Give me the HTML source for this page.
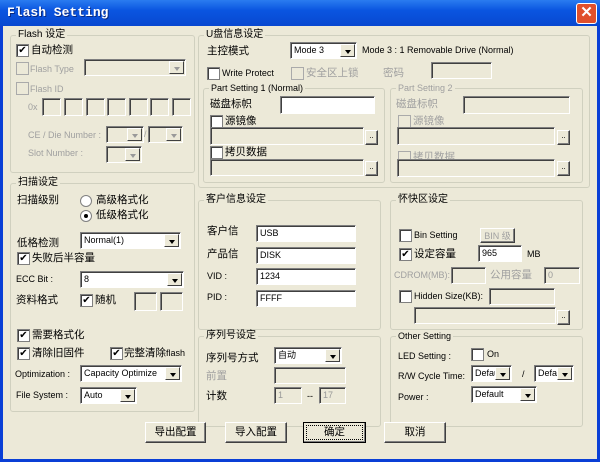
<!DOCTYPE html>
<html><head><meta charset="utf-8"><style>
*{box-sizing:border-box;margin:0;padding:0}
body{width:600px;height:462px;overflow:hidden;background:#0a3fd6;font-family:"Liberation Sans","Noto Sans CJK SC",sans-serif;font-size:9px;color:#000;position:relative}
#tb{position:absolute;left:0;top:0;width:600px;height:26px;background:linear-gradient(#2a7cf0,#0a55e0 40%,#0848d0);}
#tt{position:absolute;left:7px;top:5px;color:#fff;font:bold 13px "Liberation Mono",monospace;text-shadow:1px 1px #0a2a80}
#x{position:absolute;left:576px;top:3px;width:21px;height:21px;border:1px solid #fff;border-radius:3px;background:#e0502c;color:#fff;font:bold 15px/18px "Liberation Sans";text-align:center}
#bd{position:absolute;left:3px;top:26px;width:594px;height:433px;background:#ece9d8}
.a{position:absolute;white-space:nowrap;line-height:13px}
.c{font-size:10.5px}
.g{position:absolute;border:1px solid #d0d0bf;border-radius:3px}
.gl{position:absolute;background:#ece9d8;padding:0 2px;top:-7px;left:5px;font-size:10px;line-height:12px;white-space:nowrap}
.i{position:absolute;background:#fff;border:1px solid;border-color:#7f7f7f #fff #fff #7f7f7f;box-shadow:inset 1px 1px #404040;padding:1px 0 0 3px;font-size:9px;line-height:13px;overflow:hidden;white-space:nowrap}
.d{background:#ece9d8;color:#999}
.cb{position:absolute;width:13px;height:13px;background:#fff;border:1px solid #7f7f7f;box-shadow:inset 1px 1px #404040;font-size:10px;line-height:11px;text-align:center}
.cb.d{background:#ece9d8;box-shadow:none;border-color:#aaa}
.dr{position:absolute;right:1px;top:1px;bottom:1px;width:15px;background:#ece9d8;border:1px solid;border-color:#fff #404040 #404040 #fff}
.dr:after{content:"";position:absolute;left:4px;top:5px;border:3px solid transparent;border-top:4px solid #000}
.dd .dr:after{border-top-color:#999}
.b{position:absolute;background:#ece9d8;border:1px solid;border-color:#fff #404040 #404040 #fff;box-shadow:inset -1px -1px #808080;text-align:center;font-size:10.5px}
.gr{color:#a0a0a0}
.r{position:absolute;width:12px;height:12px;border-radius:50%;background:#fff;border:1px solid #808080}
</style></head><body>
<div id="tb"><div id="tt">Flash Setting</div><div id="x">✕</div></div>
<div id="bd"></div>

<!-- Flash 设定 -->
<div class="g" style="left:10px;top:35px;width:185px;height:138px"><div class="gl">Flash 设定</div></div>
<div class="cb" style="left:16px;top:44px">✔</div><div class="a c" style="left:31px;top:44px">自动检测</div>
<div class="cb d" style="left:16px;top:62px"></div><div class="a gr" style="left:30px;top:63px">Flash Type</div>
<div class="i d dd" style="left:84px;top:59px;width:102px;height:17px"><div class="dr"></div></div>
<div class="cb d" style="left:16px;top:82px"></div><div class="a gr" style="left:30px;top:83px">Flash ID</div>
<div class="a gr" style="left:28px;top:101px">0x</div>
<div class="i d" style="left:42px;top:98px;width:19px;height:18px"></div>
<div class="i d" style="left:64px;top:98px;width:19px;height:18px"></div>
<div class="i d" style="left:86px;top:98px;width:19px;height:18px"></div>
<div class="i d" style="left:107px;top:98px;width:19px;height:18px"></div>
<div class="i d" style="left:129px;top:98px;width:19px;height:18px"></div>
<div class="i d" style="left:150px;top:98px;width:19px;height:18px"></div>
<div class="i d" style="left:172px;top:98px;width:19px;height:18px"></div>
<div class="a gr" style="left:28px;top:129px">CE / Die Number :</div>
<div class="i d dd" style="left:106px;top:126px;width:38px;height:17px"><div class="dr"></div></div>
<div class="a gr" style="left:144px;top:128px">/</div>
<div class="i d dd" style="left:148px;top:126px;width:35px;height:17px"><div class="dr"></div></div>
<div class="a gr" style="left:28px;top:147px">Slot Number :</div>
<div class="i d dd" style="left:106px;top:146px;width:36px;height:17px"><div class="dr"></div></div>

<!-- 扫描设定 -->
<div class="g" style="left:10px;top:183px;width:185px;height:229px"><div class="gl">扫描设定</div></div>
<div class="a c" style="left:17px;top:194px">扫描级别</div>
<div class="r" style="left:80px;top:195px"></div><div class="a c" style="left:96px;top:194px">高级格式化</div>
<div class="r" style="left:80px;top:210px"><div style="position:absolute;left:3px;top:3px;width:4px;height:4px;border-radius:50%;background:#000"></div></div><div class="a c" style="left:96px;top:209px">低级格式化</div>
<div class="a c" style="left:17px;top:237px">低格检测</div>
<div class="i" style="left:80px;top:232px;width:101px;height:17px">Normal(1)<div class="dr"></div></div>
<div class="cb" style="left:17px;top:252px">✔</div><div class="a c" style="left:32px;top:252px">失败后半容量</div>
<div class="a" style="left:16px;top:273px">ECC Bit :</div>
<div class="i" style="left:80px;top:271px;width:104px;height:17px">8<div class="dr"></div></div>
<div class="a c" style="left:16px;top:294px">资料格式</div>
<div class="cb" style="left:80px;top:294px">✔</div><div class="a c" style="left:95px;top:294px">随机</div>
<div class="i d" style="left:134px;top:292px;width:23px;height:19px"></div>
<div class="i d" style="left:160px;top:292px;width:23px;height:19px"></div>
<div class="cb" style="left:17px;top:329px">✔</div><div class="a c" style="left:32px;top:329px">需要格式化</div>
<div class="cb" style="left:17px;top:347px">✔</div><div class="a c" style="left:32px;top:347px">清除旧固件</div>
<div class="cb" style="left:110px;top:347px">✔</div><div class="a c" style="left:124px;top:347px">完整清除<span style="font-size:9px">flash</span></div>
<div class="a" style="left:15px;top:368px">Optimization :</div>
<div class="i" style="left:80px;top:365px;width:102px;height:17px">Capacity Optimize<div class="dr"></div></div>
<div class="a" style="left:16px;top:389px">File System :</div>
<div class="i" style="left:80px;top:387px;width:57px;height:17px">Auto<div class="dr"></div></div>

<!-- U盘信息设定 -->
<div class="g" style="left:198px;top:35px;width:392px;height:153px"><div class="gl">U盘信息设定</div></div>
<div class="a c" style="left:207px;top:45px">主控模式</div>
<div class="i" style="left:290px;top:42px;width:67px;height:17px">Mode 3<div class="dr"></div></div>
<div class="a" style="left:362px;top:44px">Mode 3 : 1 Removable Drive (Normal)</div>
<div class="cb" style="left:207px;top:67px"></div><div class="a" style="left:222px;top:67px">Write Protect</div>
<div class="cb d" style="left:291px;top:67px"></div><div class="a gr c" style="left:306px;top:67px">安全区上锁</div>
<div class="a gr c" style="left:383px;top:67px">密码</div>
<div class="i d" style="left:431px;top:62px;width:61px;height:17px"></div>
<div class="g" style="left:203px;top:88px;width:182px;height:95px"><div class="gl" style="font-size:9px">Part Setting 1 (Normal)</div></div>
<div class="a c" style="left:210px;top:98px">磁盘标帜</div>
<div class="i" style="left:280px;top:96px;width:95px;height:18px"></div>
<div class="cb" style="left:210px;top:115px"></div><div class="a c" style="left:225px;top:115px">源镜像</div>
<div class="i d" style="left:210px;top:127px;width:154px;height:18px"></div><div class="b" style="left:365px;top:130px;width:13px;height:15px;font-size:8px">..</div>
<div class="cb" style="left:210px;top:146px"></div><div class="a c" style="left:225px;top:146px">拷贝数据</div>
<div class="i d" style="left:210px;top:159px;width:154px;height:17px"></div><div class="b" style="left:365px;top:161px;width:13px;height:15px;font-size:8px">..</div>
<div class="g" style="left:390px;top:88px;width:193px;height:95px"><div class="gl gr" style="font-size:9px">Part Setting 2</div></div>
<div class="a gr c" style="left:396px;top:98px">磁盘标帜</div>
<div class="i d" style="left:463px;top:96px;width:107px;height:18px"></div>
<div class="cb d" style="left:398px;top:115px"></div><div class="a gr c" style="left:413px;top:115px">源镜像</div>
<div class="i d" style="left:397px;top:127px;width:158px;height:18px"></div><div class="b" style="left:557px;top:130px;width:13px;height:15px;font-size:8px">..</div>
<div class="cb d" style="left:398px;top:151px"></div><div class="a gr c" style="left:413px;top:151px">拷贝数据</div>
<div class="i d" style="left:397px;top:159px;width:158px;height:18px"></div><div class="b" style="left:557px;top:161px;width:13px;height:15px;font-size:8px">..</div>

<!-- 客户信息设定 -->
<div class="g" style="left:198px;top:200px;width:183px;height:130px"><div class="gl">客户信息设定</div></div>
<div class="a c" style="left:207px;top:225px">客户信</div><div class="i" style="left:256px;top:225px;width:100px;height:17px">USB</div>
<div class="a c" style="left:207px;top:248px">产品信</div><div class="i" style="left:256px;top:247px;width:100px;height:17px">DISK</div>
<div class="a" style="left:207px;top:270px">VID :</div><div class="i" style="left:256px;top:268px;width:100px;height:17px">1234</div>
<div class="a" style="left:207px;top:291px">PID :</div><div class="i" style="left:256px;top:290px;width:100px;height:17px">FFFF</div>

<!-- 序列号设定 -->
<div class="g" style="left:198px;top:336px;width:183px;height:91px"><div class="gl">序列号设定</div></div>
<div class="a c" style="left:206px;top:352px">序列号方式</div>
<div class="i" style="left:274px;top:347px;width:68px;height:17px">自动<div class="dr"></div></div>
<div class="a gr c" style="left:206px;top:370px">前置</div>
<div class="i d" style="left:274px;top:367px;width:72px;height:17px"></div>
<div class="a c" style="left:206px;top:390px">计数</div>
<div class="i d" style="left:274px;top:387px;width:28px;height:17px">1</div>
<div class="a" style="left:307px;top:390px">--</div>
<div class="i d" style="left:319px;top:387px;width:27px;height:17px">17</div>

<!-- 怀快区设定 -->
<div class="g" style="left:390px;top:200px;width:193px;height:130px"><div class="gl">怀快区设定</div></div>
<div class="cb" style="left:399px;top:229px"></div><div class="a" style="left:414px;top:229px">Bin Setting</div>
<div class="b gr" style="left:480px;top:228px;width:35px;height:15px;font-size:9px">BIN 级</div>
<div class="cb" style="left:399px;top:248px">✔</div><div class="a c" style="left:414px;top:248px">设定容量</div>
<div class="i" style="left:478px;top:245px;width:44px;height:17px">965</div><div class="a" style="left:527px;top:248px">MB</div>
<div class="a gr" style="left:394px;top:269px">CDROM(MB):</div>
<div class="i d" style="left:451px;top:267px;width:35px;height:17px"></div>
<div class="a gr c" style="left:490px;top:269px">公用容量</div>
<div class="i d" style="left:544px;top:267px;width:36px;height:17px">0</div>
<div class="cb" style="left:399px;top:290px"></div><div class="a" style="left:414px;top:290px">Hidden Size(KB):</div>
<div class="i d" style="left:489px;top:288px;width:66px;height:17px"></div>
<div class="i d" style="left:414px;top:307px;width:142px;height:17px"></div><div class="b" style="left:557px;top:310px;width:13px;height:15px;font-size:8px">..</div>

<!-- Other Setting -->
<div class="g" style="left:390px;top:336px;width:193px;height:91px"><div class="gl" style="font-size:9px">Other Setting</div></div>
<div class="a" style="left:398px;top:350px">LED Setting :</div>
<div class="cb" style="left:471px;top:348px"></div><div class="a" style="left:487px;top:348px">On</div>
<div class="a" style="left:398px;top:370px">R/W Cycle Time:</div>
<div class="i" style="left:471px;top:365px;width:41px;height:17px">Defau<div class="dr"></div></div>
<div class="a" style="left:522px;top:368px">/</div>
<div class="i" style="left:534px;top:365px;width:40px;height:17px">Defau<div class="dr"></div></div>
<div class="a" style="left:398px;top:391px">Power :</div>
<div class="i" style="left:471px;top:386px;width:66px;height:17px">Default<div class="dr"></div></div>

<!-- Buttons -->
<div class="b" style="left:145px;top:422px;width:61px;height:21px;line-height:18px">导出配置</div>
<div class="b" style="left:225px;top:422px;width:62px;height:21px;line-height:18px">导入配置</div>
<div class="b" style="left:303px;top:422px;width:63px;height:21px;line-height:18px;border:1px solid #000;outline:1px dotted #000;outline-offset:-4px">确定</div>
<div class="b" style="left:384px;top:422px;width:62px;height:21px;line-height:18px">取消</div>
</body></html>
